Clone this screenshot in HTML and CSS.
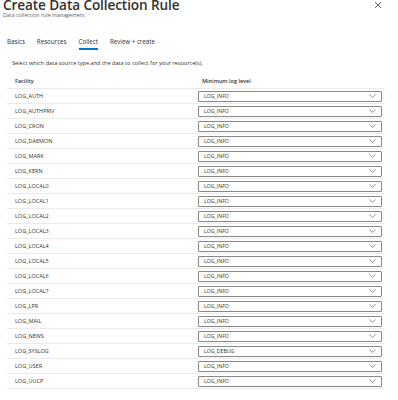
FILE: index.html
```html
<!DOCTYPE html>
<html>
<head>
    <meta charset="UTF-8">
    <title>Create Data Collection Rule</title>
    <link rel="stylesheet" href="styles.css">
</head>
<body>
<div class="panel">
    <div class="head">
        <div class="head-text">
            <h1>Create Data Collection Rule</h1>
            <p class="sub">Data collection rule management</p>
        </div>
        <svg class="close" width="8" height="8" viewBox="0 0 8 8">
            <path d="M1 1L7 7M7 1L1 7" stroke="#605e5c" stroke-width="0.9" fill="none"/>
        </svg>
    </div>

    <ul class="tabs">
        <li>Basics</li>
        <li>Resources</li>
        <li class="select">Collect</li>
        <li>Review + create</li>
    </ul>

    <p class="intro">Select which data source type and the data to collect for your resource(s).</p>

    <div class="grid">
        <div class="row th">
            <div class="cell">Facility</div>
            <div class="cell">Minimum log level</div>
        </div>
    </div>
</div>

<script type="text/javascript">
    var rows = [
        ["LOG_AUTH", "LOG_INFO"], ["LOG_AUTHPRIV", "LOG_INFO"], ["LOG_CRON", "LOG_INFO"],
        ["LOG_DAEMON", "LOG_INFO"], ["LOG_MARK", "LOG_INFO"], ["LOG_KERN", "LOG_INFO"],
        ["LOG_LOCAL0", "LOG_INFO"], ["LOG_LOCAL1", "LOG_INFO"], ["LOG_LOCAL2", "LOG_INFO"],
        ["LOG_LOCAL3", "LOG_INFO"], ["LOG_LOCAL4", "LOG_INFO"], ["LOG_LOCAL5", "LOG_INFO"],
        ["LOG_LOCAL6", "LOG_INFO"], ["LOG_LOCAL7", "LOG_INFO"], ["LOG_LPR", "LOG_INFO"],
        ["LOG_MAIL", "LOG_INFO"], ["LOG_NEWS", "LOG_INFO"], ["LOG_SYSLOG", "LOG_DEBUG"],
        ["LOG_USER", "LOG_INFO"], ["LOG_UUCP", "LOG_INFO"]
    ];
    var grid = document.querySelector(".grid"), html = "";
    for (var i = 0; i < rows.length; i++) {
        //->每一行: 名称 + 下拉框
        html += '<div class="row"><div class="cell">' + rows[i][0] + '</div>' +
            '<div class="cell"><div class="dropdown"><span>' + rows[i][1] + '</span>' +
            '<svg width="7" height="4" viewBox="0 0 7 4"><path d="M0.5 0.5L3.5 3.3L6.5 0.5" stroke="#605e5c" stroke-width="0.7" fill="none"/></svg>' +
            '</div></div></div>';
    }
    grid.innerHTML += html;
</script>
</body>
</html>
```

FILE: styles.css
```css
* {
    margin: 0;
    padding: 0;
    box-sizing: border-box;
}

body {
    background: #fff;
    color: #323130;
    font-family: "Open Sans", "Liberation Sans", sans-serif;
}

ul, li {
    list-style: none;
}

.panel {
    width: 398px;
    height: 400px;
    overflow: hidden;
}

.head {
    display: flex;
    justify-content: space-between;
    align-items: flex-start;
    padding: 0 16px 0 3px;
}

.head h1 {
    font-size: 13.6px;
    font-weight: 600;
    line-height: 10px;
    letter-spacing: -0.1px;
}

.head .sub {
    margin-top: 1px;
    font-size: 5.3px;
    line-height: 8px;
    color: #605e5c;
}

.close {
    margin-top: 1px;
}

.tabs {
    display: flex;
    gap: 12px;
    padding: 0 0 0 7px;
    margin-top: 17px;
}

.tabs li {
    font-size: 6.2px;
    line-height: 9px;
    padding: 1px 0 2px;
    border-bottom: 2px solid transparent;
}

.tabs li.select {
    border-bottom-color: #0078d4;
}

.intro {
    font-size: 5.6px;
    line-height: 8px;
    margin: 9px 0 0 12px;
}

.grid {
    margin: 7px 13px 0 7px;
}

.row {
    display: grid;
    grid-template-columns: 191px 1fr;
    height: 15px;
    border-bottom: 1px solid #edebe9;
    align-items: center;
}

.row.th {
    font-weight: 600;
}

.cell {
    font-size: 5.5px;
    padding-left: 8px;
}

.row .cell + .cell {
    padding-left: 0;
    padding-right: 3px;
}

.row.th .cell + .cell {
    padding-left: 4px;
}

.dropdown {
    display: flex;
    justify-content: space-between;
    align-items: center;
    height: 11px;
    padding: 0 5px 0 5px;
    border: 1px solid #8a8886;
    border-radius: 1px;
    font-size: 5.2px;
}
```
